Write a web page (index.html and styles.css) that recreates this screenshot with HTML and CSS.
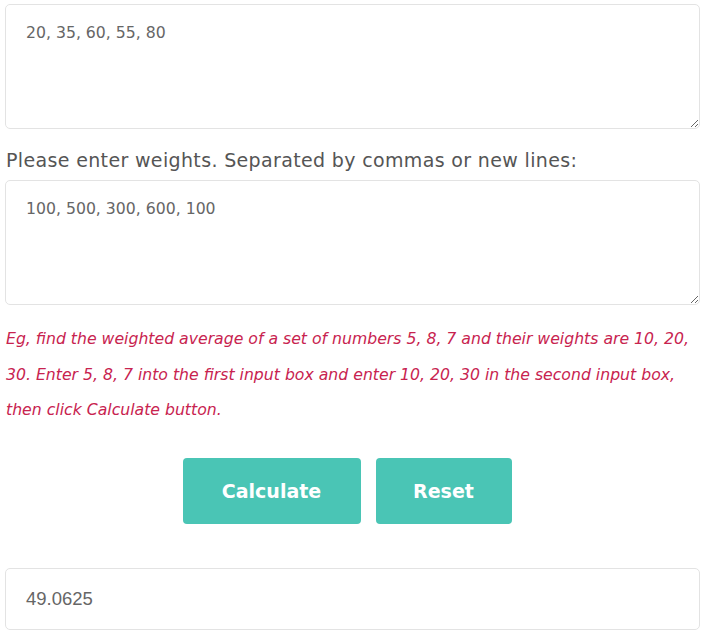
FILE: index.html
```html
<!DOCTYPE html>
<html>
<head>
<meta charset="utf-8">
<link rel="stylesheet" href="styles.css">
</head>
<body>
<div class="calc">
  <textarea class="field">20, 35, 60, 55, 80</textarea>
  <label class="label">Please enter weights. Separated by commas or new lines:</label>
  <textarea class="field">100, 500, 300, 600, 100</textarea>
  <p class="hint">Eg, find the weighted average of a set of numbers 5, 8, 7 and their weights are 10, 20, 30. Enter 5, 8, 7 into the first input box and enter 10, 20, 30 in the second input box, then click Calculate button.</p>
  <div class="actions">
    <button class="btn btn-calc">Calculate</button>
    <button class="btn btn-reset">Reset</button>
  </div>
  <div class="result">49.0625</div>
</div>
</body>
</html>
```

FILE: styles.css
```css
* { box-sizing: border-box; }
body {
  margin: 0;
  background: #fff;
  font-family: "DejaVu Sans", "Open Sans", sans-serif;
}
.calc {
  padding: 4px 5px 0 5px;
  width: 700px;
  display: flex;
  flex-direction: column;
}
.field {
  display: block;
  width: 695px;
  height: 125px;
  border: 1px solid #e3e3e3;
  border-radius: 5px;
  padding: 16px 20px 15px;
  font-family: "DejaVu Sans", sans-serif;
  font-size: 15.7px;
  line-height: 24px;
  color: #666;
  resize: vertical;
  outline: none;
}
.label {
  display: block;
  margin-top: 18px;
  margin-bottom: 7px;
  margin-left: 1px;
  font-size: 19px;
  letter-spacing: 0.35px;
  line-height: 26px;
  color: #555;
}
.hint {
  margin: 16px 0 0 1px;
  font-style: italic;
  font-size: 15.7px;
  line-height: 35.5px;
  color: #c8234f;
}
.actions {
  display: flex;
  justify-content: center;
  gap: 15px;
  margin-top: 30px;
  padding-right: 6px;
}
.btn {
  height: 66px;
  border: none;
  border-radius: 4px;
  background: #4ac5b5;
  color: #fff;
  font-family: "DejaVu Sans", sans-serif;
  font-weight: 600;
  font-size: 19px;
}
.btn-calc { width: 178px; }
.btn-reset { width: 136px; }
.result {
  margin-top: 44px;
  height: 62px;
  width: 695px;
  border: 1px solid #e3e3e3;
  border-radius: 5px;
  padding: 0 20px;
  display: flex;
  align-items: center;
  font-family: "Liberation Sans", Arial, sans-serif;
  font-size: 18.5px;
  color: #666;
}
```
